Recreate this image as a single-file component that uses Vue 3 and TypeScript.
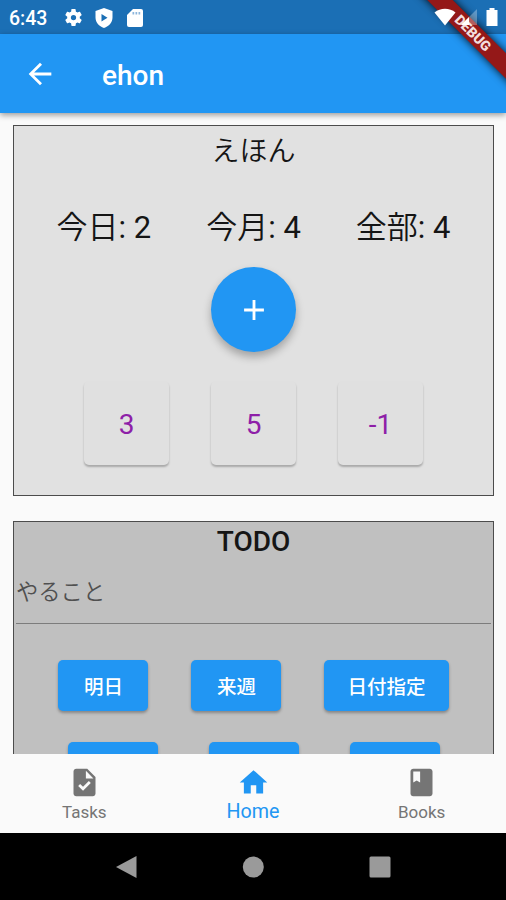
<script setup lang="ts">
interface Counter { label: string; value: number }

const counters: Counter[] = [
  { label: '今日', value: 2 },
  { label: '今月', value: 4 },
  { label: '全部', value: 4 },
]
const steps: number[] = [3, 5, -1]
const dueOptions: string[] = ['明日', '来週', '日付指定']
const tabs = [
  {
    name: 'Tasks',
    active: false,
    icon: 'M14 2H6c-1.1 0-1.99.9-1.99 2L4 20c0 1.1.89 2 1.99 2H18c1.1 0 2-.9 2-2V8l-6-6zm-3.06 16L7.4 14.46l1.41-1.41 2.12 2.12 4.24-4.24 1.41 1.41L10.94 18zM13 9V3.5L18.5 9H13z',
  },
  { name: 'Home', active: true, icon: 'M10 20v-6h4v6h5v-8h3L12 3 2 12h3v8z' },
  {
    name: 'Books',
    active: false,
    icon: 'M18 2H6c-1.1 0-2 .9-2 2v16c0 1.1.9 2 2 2h12c1.1 0 2-.9 2-2V4c0-1.1-.9-2-2-2zM6 4h5v8l-2.5-1.5L6 12V4z',
  },
]
</script>

<template>
  <div class="phone">
    <div class="status">
      <span class="clock">6:43</span>
      <svg class="gear" viewBox="0 0 24 24"><path d="M19.14 12.94c.04-.3.06-.61.06-.94s-.02-.64-.07-.94l2.03-1.58a.49.49 0 0 0 .12-.61l-1.92-3.32a.488.488 0 0 0-.59-.22l-2.39.96c-.5-.38-1.03-.7-1.62-.94l-.36-2.54a.484.484 0 0 0-.48-.41h-3.84c-.24 0-.43.17-.47.41l-.36 2.54c-.59.24-1.13.57-1.62.94l-2.39-.96c-.22-.08-.47 0-.59.22L2.74 8.87c-.12.21-.08.47.12.61l2.03 1.58c-.05.3-.09.63-.09.94s.02.64.07.94l-2.03 1.58a.49.49 0 0 0-.12.61l1.92 3.32c.12.22.37.29.59.22l2.39-.96c.5.38 1.03.7 1.62.94l.36 2.54c.05.24.24.41.48.41h3.84c.24 0 .44-.17.47-.41l.36-2.54c.59-.24 1.13-.56 1.62-.94l2.39.96c.22.08.47 0 .59-.22l1.92-3.32c.12-.22.07-.47-.12-.61l-2.01-1.58zM12 15A3 3 0 1 1 12 9a3 3 0 0 1 0 6z" /></svg>
      <svg class="shield" viewBox="0 0 18 20" fill-rule="evenodd"><path d="M9 0 17.5 3v6.500c0 5-3.500 8.700-8.500 10.500C4 18.200.5 14.500.5 9.500V3zM6.500 6v7.500l6-3.750z" /></svg>
      <svg class="sd" viewBox="0 0 16 20"><path d="M6 1h8q2 0 2 2v14q0 2-2 2H2q-2 0-2-2V7z" /><path class="pins" d="M5.500 4v2.500h1.700V4zM8.500 4v2.500h1.700V4zM11.500 4v2.500h1.700V4z" /></svg>
    </div>

    <header class="appbar">
      <svg class="back" viewBox="0 0 24 24"><path d="M20 11H7.830l5.590-5.590L12 4l-8 8 8 8 1.410-1.410L7.830 13H20v-2z" /></svg>
      <h1>ehon</h1>
    </header>

    <div class="ribbon"><span>DEBUG</span></div>
    <svg class="signals" viewBox="0 0 72 24">
      <path d="M.5 5.500C6.500 .5 15.500 .5 21.500 5.500L11 18.500z" />
      <path d="M43 2v16H27z" opacity=".3" />
      <path d="M35 10v8h-8z" />
      <path d="M52.500 3h3V1h5v2h3v16h-11z" />
    </svg>

    <main class="content">
      <section class="card counter">
        <h2>えほん</h2>
        <div class="totals">
          <span v-for="c in counters" :key="c.label">{{ c.label }}<b>: {{ c.value }}</b></span>
        </div>
        <button class="fab"><svg viewBox="0 0 24 24"><path d="M19 13h-6v6h-2v-6H5v-2h6V5h2v6h6v2z" /></svg></button>
        <div class="steps">
          <button v-for="s in steps" :key="s">{{ s }}</button>
        </div>
      </section>

      <section class="card todo">
        <h2>TODO</h2>
        <div class="field">やること</div>
        <div class="dues">
          <button v-for="d in dueOptions" :key="d">{{ d }}</button>
        </div>
        <div class="more"><button v-for="n in 3" :key="n"></button></div>
      </section>
    </main>

    <nav class="tabs">
      <a v-for="t in tabs" :key="t.name" :class="{ active: t.active }">
        <svg viewBox="0 0 24 24"><path :d="t.icon" /></svg>
        <span>{{ t.name }}</span>
      </a>
    </nav>

    <div class="system">
      <svg viewBox="0 0 22 24"><path d="M20.500 1v22L0 12z" /></svg>
      <svg viewBox="0 0 22 24"><circle cx="11.300" cy="12" r="10.500" /></svg>
      <svg viewBox="0 0 22 24"><rect x=".5" y="1.500" width="21" height="21" rx="1.500" /></svg>
    </div>
  </div>
</template>

<style>
body {
  margin: 0;
}
</style>

<style scoped>
.phone {
  position: relative;
  display: flex;
  flex-direction: column;
  width: 506px;
  height: 900px;
  overflow: hidden;
  background: #fafafa;
  font-family: Roboto, "Noto Sans CJK JP", sans-serif;
  color: #151515;
}
button {
  border: 0;
  padding: 0;
  font: inherit;
}
h1, h2 {
  margin: 0;
}
svg {
  display: block;
  fill: currentColor;
}
.status {
  display: flex;
  align-items: center;
  box-sizing: border-box;
  height: 34px;
  padding: 2px 0 0 9px;
  background: #1b6fb5;
  color: #fff;
  flex: none;
}
.clock {
  width: 54px;
  font-size: 19.500px;
  font-weight: 500;
}
.gear {
  width: 21px;
  height: 21px;
  margin: -2px 11px 0 0;
}
.shield {
  width: 18px;
  height: 20px;
  margin: -1px 14px 0 0;
}
.sd {
  width: 16px;
  height: 20px;
  margin-top: -1px;
}
.pins {
  fill: #8db6dc;
}
.appbar {
  position: relative;
  display: flex;
  align-items: center;
  height: 79px;
  padding-left: 23px;
  background: #2196f3;
  color: #fff;
  box-shadow: 0 2px 6px rgba(0, 0, 0, 0.4);
  flex: none;
}
.back {
  width: 34px;
  height: 34px;
}
h1 {
  margin-left: 45px;
  padding-top: 3px;
  font-size: 28px;
  font-weight: 500;
}
.ribbon {
  position: absolute;
  top: 24px;
  right: -47px;
  width: 160px;
  height: 18px;
  background: #941818;
  box-shadow: 0 0 9px rgba(0, 0, 0, 0.9);
  color: #f3dddd;
  font-size: 14px;
  font-weight: 900;
  line-height: 18px;
  text-align: center;
  transform: rotate(45deg);
}
.signals {
  position: absolute;
  top: 7px;
  left: 434px;
  width: 72px;
  height: 24px;
  color: #fff;
}
.content {
  flex: 1;
  min-height: 0;
  overflow: hidden;
  padding: 12px 12px 0 13px;
}
.card {
  display: flex;
  flex-direction: column;
  align-items: center;
  box-sizing: border-box;
  border: 1.400px solid #4c4c4c;
}
.card h2 {
  font-size: 28px;
}
.counter {
  height: 371px;
  background: #e1e1e1;
}
.counter h2 {
  height: 48px;
  line-height: 52px;
  font-weight: 350;
}
.totals {
  display: flex;
  gap: 55px;
  margin-top: 28px;
  font-size: 31px;
  font-weight: 350;
  line-height: 51px;
}
.totals b {
  font-weight: 400;
}
.fab {
  display: flex;
  align-items: center;
  justify-content: center;
  width: 85px;
  height: 85px;
  margin-top: 14px;
  border-radius: 50%;
  background: #2196f3;
  color: #fff;
  box-shadow: 0 5px 8px rgba(0, 0, 0, 0.28);
}
.fab svg {
  width: 34px;
  height: 34px;
}
.steps {
  display: flex;
  gap: 42px;
  margin-top: 29px;
}
.steps button {
  width: 85px;
  height: 84px;
  padding-top: 2px;
  border-radius: 5px;
  background: #e0e0e0;
  color: #8e1fa8;
  box-shadow: 0 2px 2px rgba(0, 0, 0, 0.25);
  font-size: 28px;
}
.todo {
  height: 400px;
  margin-top: 25px;
  background: #c0c0c0;
}
.todo h2 {
  height: 38px;
  line-height: 39px;
  font-weight: 500;
}
.field {
  align-self: stretch;
  box-sizing: border-box;
  height: 64px;
  margin: 0 2px;
  border-bottom: 1.400px solid #7c7c7c;
  color: #505050;
  font-size: 22.300px;
  font-weight: 350;
  line-height: 64px;
}
.dues,
.more {
  display: flex;
}
.dues {
  gap: 43px;
  margin-top: 36px;
}
.more {
  gap: 51px;
  margin-top: 31px;
}
.dues button,
.more button {
  min-width: 90px;
  height: 51px;
  padding: 0 23px;
  border-radius: 5px;
  background: #2196f3;
  box-shadow: 0 2px 3px rgba(0, 0, 0, 0.3);
  color: #fff;
  font-size: 19.500px;
  font-weight: 500;
}
.tabs {
  display: flex;
  height: 79px;
  background: #fafafa;
  color: #757575;
  flex: none;
}
.tabs a {
  display: flex;
  flex: 1;
  flex-direction: column;
  align-items: center;
  padding-top: 12px;
  font-size: 17px;
}
.tabs svg {
  width: 33px;
  height: 33px;
}
.tabs span {
  margin-top: 3px;
  line-height: 20px;
}
.tabs .active {
  color: #2196f3;
  font-size: 19.700px;
}
.system {
  display: flex;
  align-items: center;
  justify-content: center;
  gap: 104.500px;
  height: 67px;
  background: #000;
  color: #9a9a9a;
  flex: none;
}
.system svg {
  width: 22px;
  height: 24px;
}
</style>
